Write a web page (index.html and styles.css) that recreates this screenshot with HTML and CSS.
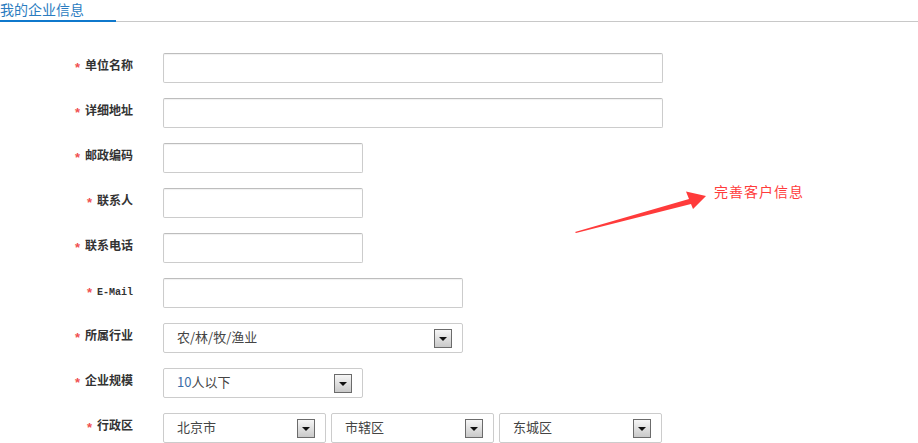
FILE: index.html
```html
<!DOCTYPE html>
<html lang="zh-CN">
<head>
<meta charset="utf-8">
<title>我的企业信息</title>
<link rel="stylesheet" href="styles.css">
</head>
<body>
<div class="page">
  <div class="tabs">
    <div class="tab">我的企业信息</div>
  </div>

  <form class="form">
    <div class="row">
      <label class="label"><span class="star">*</span>单位名称</label>
      <input class="field field-lg" type="text">
    </div>
    <div class="row">
      <label class="label"><span class="star">*</span>详细地址</label>
      <input class="field field-lg" type="text">
    </div>
    <div class="row">
      <label class="label"><span class="star">*</span>邮政编码</label>
      <input class="field field-sm" type="text">
    </div>
    <div class="row">
      <label class="label"><span class="star">*</span>联系人</label>
      <input class="field field-sm" type="text">
    </div>
    <div class="row">
      <label class="label"><span class="star">*</span>联系电话</label>
      <input class="field field-sm" type="text">
    </div>
    <div class="row">
      <label class="label"><span class="star">*</span><span class="latin">E-Mail</span></label>
      <input class="field field-md" type="text">
    </div>
    <div class="row">
      <label class="label"><span class="star">*</span>所属行业</label>
      <div class="select field-md"><span class="select-text">农/林/牧/渔业</span><span class="drop"></span></div>
    </div>
    <div class="row">
      <label class="label"><span class="star">*</span>企业规模</label>
      <div class="select field-sm"><span class="select-text"><span class="num">10</span>人以下</span><span class="drop"></span></div>
    </div>
    <div class="row">
      <label class="label"><span class="star">*</span>行政区</label>
      <div class="selects">
        <div class="select field-xs"><span class="select-text">北京市</span><span class="drop"></span></div>
        <div class="select field-xs"><span class="select-text">市辖区</span><span class="drop"></span></div>
        <div class="select field-xs"><span class="select-text">东城区</span><span class="drop"></span></div>
      </div>
    </div>
  </form>

  <div class="note">
    <svg class="note-arrow" width="140" height="50" viewBox="570 188 140 50" xmlns="http://www.w3.org/2000/svg">
      <polygon points="575,232 689,199 686,191.5 706,196 693,209 691,204 576,233" fill="#ff3b3b"/>
    </svg>
    <span class="note-text">完善客户信息</span>
  </div>
</div>
</body>
</html>
```

FILE: styles.css
```css
html, body {
  margin: 0;
  padding: 0;
  background: #fff;
}

body {
  font-family: "Noto Sans CJK SC", "Liberation Sans", sans-serif;
  color: #333;
}

.page {
  position: relative;
  width: 918px;
  height: 443px;
  overflow: hidden;
}

.tabs {
  display: flex;
  border-bottom: 1px solid #c8c8c8;
}

.tab {
  width: 116px;
  font-size: 14px;
  line-height: 16px;
  color: #2b7cc0;
  padding-top: 1px;
  padding-bottom: 3px;
  border-bottom: 2px solid #0f78cc;
  margin-bottom: -1px;
  white-space: nowrap;
}

.form {
  display: flex;
  flex-direction: column;
  gap: 15px;
  margin: 31px 0 0;
}

.row {
  display: flex;
  align-items: flex-start;
}

.label {
  width: 133px;
  margin-right: 30px;
  text-align: right;
  font-size: 12px;
  font-weight: bold;
  line-height: 14px;
  padding-top: 5px;
  color: #333;
  white-space: nowrap;
}

.star {
  color: #f05050;
  font-family: "Liberation Sans", sans-serif;
  font-size: 13px;
  font-weight: bold;
  margin-right: 5px;
  position: relative;
  top: 2px;
}

.latin {
  font-family: "Liberation Mono", monospace;
  font-size: 10px;
  font-weight: bold;
}

.field {
  box-sizing: border-box;
  height: 30px;
  margin: 0;
  border: 1px solid #cccccc;
  border-top-color: #bdbdbd;
  border-radius: 2px;
  box-shadow: inset 0 1px 1px rgba(0, 0, 0, 0.06);
  background: #fff;
  padding: 0 8px;
  outline: none;
}

.field-lg { width: 500px; }
.field-md { width: 300px; }
.field-sm { width: 200px; }
.field-xs { width: 163px; }

.selects {
  display: flex;
  gap: 5px;
}

.select {
  box-sizing: border-box;
  height: 30px;
  border: 1px solid #cccccc;
  border-radius: 2px;
  background: #fff;
  display: flex;
  align-items: center;
  justify-content: space-between;
  padding: 0 10px 0 13px;
}

.select-text {
  font-size: 13px;
  line-height: 16px;
  color: #444;
  white-space: nowrap;
  position: relative;
  top: -1px;
}

.num {
  color: #3a6ea8;
}

.drop {
  position: relative;
  box-sizing: border-box;
  width: 18px;
  height: 19px;
  border: 1px solid #6b6b6b;
  background: linear-gradient(#f6f6f6, #c9c9c9);
}

.drop::after {
  content: "";
  position: absolute;
  left: 4px;
  top: 7px;
  border-left: 4px solid transparent;
  border-right: 4px solid transparent;
  border-top: 4px solid #111;
}

.note-arrow {
  position: absolute;
  left: 570px;
  top: 188px;
}

.note-text {
  position: absolute;
  left: 714px;
  top: 181px;
  font-size: 14px;
  line-height: 20px;
  color: #ff3b3b;
  letter-spacing: 1px;
  white-space: nowrap;
}
```
